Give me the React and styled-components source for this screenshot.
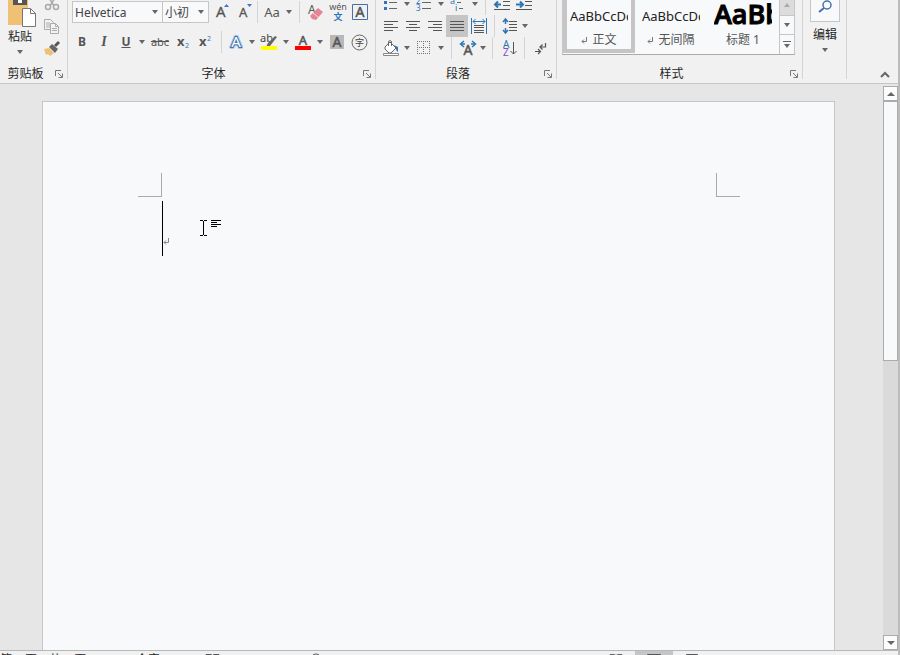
import React from 'react';
import styled, { createGlobalStyle } from 'styled-components';

const GlobalStyle = createGlobalStyle`
  * {
    box-sizing: border-box;
  }

  body {
    margin: 0;
    font-family: "Noto Sans", "Noto Sans CJK SC", sans-serif;
    font-size: 12px;
    color: #262626;
  }

  button, select {
    font: inherit;
    color: inherit;
  }

  svg {
    overflow: visible;
  }
`;

const Window = styled.div`
  display: flex;
  flex-direction: column;
  height: 100vh;
  background: #f1f1f1;
  border-right: 2px solid #bcbcbc;
  overflow: hidden;
`;

const Ribbon = styled.header`
  display: flex;
  align-items: flex-end;
  flex: none;
  height: 84px;
  border-bottom: 1px solid #c6c6c6;
  overflow: hidden;
`;

const Group = styled.section`
  display: flex;
  flex-direction: column;
  flex: none;
  justify-content: flex-end;
  width: ${props => props.$w}px;
  height: 79px;
  margin-bottom: 4px;
  border-right: 1px solid #d4d4d4;
`;

const GroupBody = styled.div`
  display: flex;
  flex: 1;
  min-height: 0;
  flex-direction: ${props => (props.$stack ? 'column' : 'row')};
  align-items: ${props => (props.$stack ? 'stretch' : 'flex-end')};
  justify-content: ${props => (props.$stack ? 'flex-end' : 'flex-start')};
  padding: 0 0 ${props => props.$bottom || 0}px ${props => props.$left || 0}px;
`;

const GroupFooter = styled.div`
  display: grid;
  grid-template-columns: 1fr 16px;
  align-items: center;
  justify-items: center;
  flex: none;
  height: 16px;
  line-height: 16px;
`;

const Row = styled.div`
  display: flex;
  align-items: center;
  flex: none;
  height: ${props => props.$h || 22}px;
`;

const Column = styled.div`
  display: flex;
  flex-direction: column;
  align-items: center;
  width: ${props => props.$w}px;
`;

const Tool = styled.button`
  display: flex;
  align-items: center;
  justify-content: center;
  flex: none;
  width: ${props => props.$w || 22}px;
  height: 22px;
  padding: 0;
  border: 0;
  background: ${props => (props.$active ? '#c5c5c5' : 'none')};
  color: #555;
`;

const Glyph = styled.span`
  font-size: ${props => props.$size || 12}px;
  line-height: 20px;
  font-weight: ${props => (props.$bold ? 700 : 400)};
  font-style: ${props => (props.$italic ? 'italic' : 'normal')};
  text-decoration: ${props => props.$line || 'none'};
  font-family: ${props => (props.$serif ? '"Liberation Serif", serif' : 'inherit')};
`;

const Divider = styled.span`
  flex: none;
  width: 1px;
  height: 22px;
  margin: 0 ${props => props.$gap || 5}px;
  background: #d4d4d4;
`;

const Big = styled.button`
  display: flex;
  flex-direction: column;
  align-items: center;
  width: 40px;
  padding: 0;
  border: 0;
  background: none;
  line-height: 18px;
`;

const ArrowSpace = styled.span`
  display: flex;
  justify-content: center;
  height: ${props => props.$h}px;
  padding-top: 4px;
`;

const FieldBox = styled.label`
  display: flex;
  align-items: center;
  position: relative;
  width: ${props => props.$w}px;
  height: 22px;
  border: 1px solid #c6c6c6;
  background: #f8f9fb;

  & + & {
    border-left: 0;
  }

  svg {
    position: absolute;
    right: 4px;
    pointer-events: none;
  }
`;

const Field = styled.select`
  appearance: none;
  width: 100%;
  height: 20px;
  padding: 0 2px;
  border: 0;
  background: none;
  color: #444;
`;

const Gallery = styled.div`
  display: flex;
  height: 60px;
  border: 1px solid #c6c6c6;
  border-bottom-color: #ababab;
  background: #f8f9fb;
`;

const StyleCard = styled.button`
  display: flex;
  flex-direction: column;
  align-items: center;
  justify-content: flex-end;
  width: 72px;
  height: 57px;
  padding: 0 3px;
  border: ${props => (props.$active ? '4px solid #c5c5c5' : '4px solid transparent')};
  background: none;
`;

const Sample = styled.span`
  flex: none;
  width: 58px;
  height: 26px;
  margin-bottom: 2px;
  overflow: hidden;
  color: ${props => (props.$heading ? '#000' : '#222')};
  white-space: nowrap;
  text-align: left;
  font-family: ${props => (props.$heading ? '"Open Sans", sans-serif' : 'inherit')};
  font-size: ${props => (props.$heading ? 27 : 13)}px;
  font-weight: ${props => (props.$heading ? 600 : 400)};
  line-height: ${props => (props.$heading ? 22 : 26)}px;
  -webkit-text-stroke: ${props => (props.$heading ? '1px #000' : '0')};
`;

const StyleName = styled.span`
  display: flex;
  align-items: center;
  flex: none;
  gap: 4px;
  height: 18px;
  line-height: 18px;
  color: #555;
`;

const GalleryScroll = styled.div`
  display: flex;
  flex-direction: column;
  width: 15px;
  margin-left: auto;
  border-left: 1px solid #c6c6c6;
`;

const ScrollStep = styled.button`
  display: flex;
  align-items: center;
  justify-content: center;
  flex: 1;
  padding: 0;
  border: 0;
  background: ${props => (props.$off ? '#dcdcdc' : '#f8f9fb')};

  & + & {
    border-top: 1px solid #c6c6c6;
  }
`;

const SearchBox = styled.span`
  display: flex;
  align-items: center;
  justify-content: center;
  width: 30px;
  height: 30px;
  margin-bottom: 4px;
  border: 1px solid #c6c6c6;
  background: #f8f9fb;
`;

const Collapse = styled.button`
  margin: 0 8px 4px auto;
  padding: 0;
  border: 0;
  background: none;
  line-height: 0;
`;

const Workspace = styled.main`
  display: flex;
  flex: 1;
  min-height: 0;
  background: #e6e6e6;
`;

const Canvas = styled.div`
  flex: 1;
  padding: 17px 48px 0 42px;
`;

const Page = styled.article`
  height: 100%;
  padding: 71px 94px 0 95px;
  border: 1px solid #c6c6c6;
  border-bottom: 0;
  background: #f8f9fb;
`;

const Margins = styled.div`
  display: flex;
  justify-content: space-between;
`;

const Corner = styled.span`
  width: 24px;
  height: 24px;
  border-bottom: 1px solid #ababab;
  border-right: ${props => (props.$right ? 0 : '1px solid #ababab')};
  border-left: ${props => (props.$right ? '1px solid #ababab' : 0)};
`;

const Line = styled.div`
  display: flex;
  height: 55px;
  margin: 4px 0 0 24px;
`;

const Caret = styled.span`
  width: 1px;
  height: 55px;
  background: #000;
`;

const ParagraphEnd = styled.span`
  padding-top: 36px;
  line-height: 0;
`;

const Pointer = styled.span`
  padding: 18px 0 0 29px;
  line-height: 0;
`;

const Scrollbar = styled.div`
  display: flex;
  flex-direction: column;
  width: 15px;
  margin-top: 2px;
  background: #dadada;
`;

const ScrollArrow = styled.button`
  display: flex;
  align-items: center;
  justify-content: center;
  flex: none;
  height: 15px;
  padding: 0;
  border: 1px solid #ababab;
  background: #fcfcfc;
`;

const Thumb = styled.div`
  height: 260px;
  margin-bottom: auto;
  border: 1px solid #ababab;
  background: #f8f9fb;
`;

const Status = styled.footer`
  display: flex;
  flex: none;
  height: 5px;
  border-top: 1px solid #b8b8b8;
  background: #f1f1f1;
  overflow: hidden;
  line-height: 18px;
`;

const StatusItem = styled.span`
  flex: none;
  width: ${props => props.$w}px;
  white-space: nowrap;
`;

const StatusIcon = styled(StatusItem)`
  padding-top: 2px;
  line-height: 0;
`;

const Views = styled.div`
  display: flex;
  margin-left: auto;
  margin-right: 187px;
`;

const View = styled.button`
  display: flex;
  align-items: flex-start;
  justify-content: center;
  width: 38px;
  height: 22px;
  padding: 2px 0 0;
  border: 0;
  background: ${props => (props.$active ? '#c5c5c5' : 'none')};
`;

const Arrow = ({ up, w = 6, color = '#666' }) => (
  <svg width={w} height="4" viewBox="0 0 6 4" preserveAspectRatio="none" aria-hidden="true">
    <path d={up ? 'M0 4h6L3 0z' : 'M0 0h6L3 4z'} fill={color} />
  </svg>
);

const Drop = ({ w = 10, label }) => (
  <Tool $w={w} aria-label={label}><Arrow /></Tool>
);

const Launcher = () => (
  <Tool $w={12} aria-label="更多选项">
    <svg width="8" height="8" viewBox="0 0 8 8" fill="none" stroke="#777">
      <path d="M.5 6V.5H6M3 3l4 4M7.500 3.500v4h-4" />
    </svg>
  </Tool>
);

const Lines = ({ rows, size = 14 }) => (
  <svg width={size} height="12" viewBox={`0 0 ${size} 12`} stroke="#555">
    {rows.map(([from, to], i) => <path key={i} d={`M${from} ${i * 3 + 1.5}H${to}`} />)}
  </svg>
);

const PasteIcon = () => (
  <svg width="30" height="32" viewBox="0 0 30 32">
    <path d="M3 4h20v25H3z" fill="#efc175" />
    <path d="M8 1h14v8H8z" fill="#555" />
    <path d="M13 4h4v3h-4z" fill="#fff" />
    <path d="M17.500 12.500h8l5 5v13h-13z" fill="#fff" stroke="#777" />
    <path d="M25.500 12.500v5h5" fill="none" stroke="#777" />
  </svg>
);

const CutIcon = () => (
  <svg width="16" height="16" viewBox="0 0 16 16" fill="none" stroke="#aaa" strokeWidth="1.500">
    <path d="M4 0l6 10M12 0L6 10" />
    <circle cx="4" cy="11" r="2.500" />
    <circle cx="12" cy="11" r="2.500" />
  </svg>
);

const CopyIcon = () => (
  <svg width="16" height="15" viewBox="0 0 16 15" fill="#f4f4f4" stroke="#aaa">
    <path d="M.5.5h6l3 3v7h-9zM2 4h4M2 6h5M2 8h5" />
    <path d="M6.500 4.500h5l3 3v7h-8zM11.500 4.500v3h3M8 9.500h5M8 11.500h5" />
  </svg>
);

const BrushIcon = () => (
  <svg width="16" height="15" viewBox="0 0 16 15">
    <path d="M0 8l5-1 5 5-4 3-2-2-2 1z" fill="#efc175" />
    <path d="M5 6l3-3 6 5-3 4z" fill="#666" />
    <path d="M10 4l4-4 2 2-4 4z" fill="#555" />
  </svg>
);

const EraserIcon = () => (
  <svg width="16" height="18" viewBox="0 0 16 18">
    <text x="0" y="11" fontSize="12" fill="#555">A</text>
    <path d="M2 13l8-8 5 4-7 8-4-1z" fill="#e58593" />
    <path d="M5 10l5 4" stroke="#f8d4d8" />
  </svg>
);

const PinyinIcon = () => (
  <svg width="18" height="20" viewBox="0 0 18 20">
    <text x="9" y="8" fontSize="9" textAnchor="middle" fill="#555">wén</text>
    <text x="9" y="18" fontSize="9" textAnchor="middle" fill="#2e75b6" fontWeight="700">文</text>
  </svg>
);

const BoxedIcon = () => (
  <svg width="16" height="17" viewBox="0 0 16 17">
    <path d="M.5.5h15v15H.5z" fill="none" stroke="#4472a8" />
    <text x="8" y="13" fontSize="14" textAnchor="middle" fill="#555" stroke="#555" strokeWidth=".5">A</text>
  </svg>
);

const ResizeIcon = ({ up }) => (
  <svg width="14" height="18" viewBox="0 0 14 18">
    <text x="1" y="14" fontSize={up ? 15 : 13} fill="#555" stroke="#555" strokeWidth=".3">A</text>
    <path d={up ? 'M9 4h5l-2.500-3z' : 'M9 1h5l-2.500 3z'} fill="#4472c4" />
  </svg>
);

const OutlineIcon = () => (
  <svg width="16" height="18" viewBox="0 0 16 18" fontSize="15">
    <text x="7" y="14" textAnchor="middle" fill="none" stroke="#a9cbea" strokeWidth="4" strokeLinejoin="round">A</text>
    <text x="7" y="14" textAnchor="middle" fill="none" stroke="#4472a8" strokeWidth="2">A</text>
    <text x="7" y="14" textAnchor="middle" fill="#fff">A</text>
  </svg>
);

const HighlightIcon = () => (
  <svg width="18" height="18" viewBox="0 0 18 18">
    <text x="0" y="9" fontSize="11" fill="#444">ab</text>
    <path d="M15 3l2 1-7 9-4 1 2-4z" fill="#666" />
    <path d="M1 13h16v4H1z" fill="#ff0" />
  </svg>
);

const FontColorIcon = () => (
  <svg width="16" height="18" viewBox="0 0 16 18">
    <text x="8" y="12" fontSize="13" textAnchor="middle" fill="#555" stroke="#555" strokeWidth=".5">A</text>
    <path d="M0 13h16v4H0z" fill="#f00" />
  </svg>
);

const ShadeIcon = () => (
  <svg width="14" height="14" viewBox="0 0 14 14">
    <path d="M0 0h14v14H0z" fill="#b8b8b8" />
    <text x="7" y="12" fontSize="14" textAnchor="middle" fill="#555" stroke="#555" strokeWidth=".5">A</text>
  </svg>
);

const CircledIcon = () => (
  <svg width="17" height="17" viewBox="0 0 17 17">
    <circle cx="8.500" cy="8.500" r="7.500" fill="none" stroke="#666" />
    <text x="8.500" y="12" fontSize="9" textAnchor="middle" fill="#444">字</text>
  </svg>
);

const ScriptIcon = ({ sup }) => (
  <svg width="14" height="16" viewBox="0 0 14 16">
    <text x="1" y="12" fontSize="13" fontWeight="700" fill="#555">x</text>
    <text x="9" y={sup ? 7 : 14} fontSize="7" fill="#2e75b6">2</text>
  </svg>
);

const BulletIcon = () => (
  <svg width="14" height="16" viewBox="0 0 14 16" stroke="#666">
    <path d="M5 6.500h8M5 12.500h8" />
    <path d="M0 6.500h3M0 12.500h3" stroke="#2e75b6" strokeWidth="3" />
  </svg>
);

const NumberIcon = () => (
  <svg width="16" height="18" viewBox="0 0 16 18" fontSize="8" fill="#2e75b6">
    <text x="0" y="9">2</text>
    <text x="0" y="16">3</text>
    <path d="M6 7.500h9M6 13.500h9" stroke="#666" />
  </svg>
);

const LevelIcon = () => (
  <svg width="16" height="18" viewBox="0 0 16 18" fontSize="9" fill="#2e75b6">
    <text x="0" y="9">a</text>
    <text x="5" y="16">i</text>
    <path d="M7 7.500h4M9 13.500h4" stroke="#666" />
  </svg>
);

const IndentIcon = ({ out }) => (
  <svg width="16" height="16" viewBox="0 0 16 16">
    <path d="M9 5.500h7M9 9.500h7M0 13.500h16" stroke="#555" />
    <path
      d={out ? 'M1 8.500h6M4 5.500l-3 3 3 3' : 'M0 8.500h7M4 5.500l3 3-3 3'}
      fill="none"
      stroke="#2e75b6"
      strokeWidth="2"
    />
  </svg>
);

const DistributeIcon = () => (
  <svg width="16" height="16" viewBox="0 0 16 16" fill="none">
    <path d="M.5 0v16M15.500 0v16M2 3.500h12M4.500 1L2 3.500 4.500 6M11.500 1L14 3.500 11.500 6" stroke="#2e75b6" />
    <path d="M3 7.500h10M3 9.500h10M3 12.500h10M3 14.500h10" stroke="#555" />
  </svg>
);

const SpacingIcon = () => (
  <svg width="16" height="16" viewBox="0 0 16 16" fill="none">
    <path d="M3.500 1v5M1 4l2.500-3L6 4M3.500 10v5M1 12l2.500 3L6 12" stroke="#2e75b6" strokeWidth="1.500" />
    <path d="M7 3.500h8M7 6.500h8M7 9.500h8M7 12.500h8" stroke="#555" />
  </svg>
);

const BucketIcon = () => (
  <svg width="18" height="17" viewBox="0 0 18 17" fill="none">
    <path d="M3 7l5-5 6 6-5 5H7L3 9z" fill="#fff" stroke="#666" />
    <path d="M6.500 6V1.500c0-1 3-1 3 0V6" stroke="#666" />
    <path d="M12 5l4 2v5c-2-1-2-3-2-4z" fill="#2e75b6" />
    <path d="M1.500 13.500h15v2h-15z" fill="#fff" stroke="#888" />
  </svg>
);

const BorderIcon = () => (
  <svg width="14" height="14" viewBox="0 0 14 14" stroke="#777" strokeDasharray="1 1">
    <path d="M0 .5h14M0 6.500h14M0 12.500h14M.5 0v14M6.500 0v14M12.500 0v14" />
  </svg>
);

const WidthIcon = () => (
  <svg width="18" height="16" viewBox="0 0 18 16">
    <text x="9" y="15" fontSize="14" textAnchor="middle" fill="#555" stroke="#555" strokeWidth=".5">A</text>
    <path d="M5 1L1.500 4 5 7M2 4h4M13 1l3.500 3L13 7M16 4h-4" fill="none" stroke="#2e75b6" strokeWidth="1.500" />
  </svg>
);

const SortIcon = () => (
  <svg width="16" height="18" viewBox="0 0 16 18" fontSize="10">
    <text x="2" y="9" fill="#2e75b6">A</text>
    <text x="2" y="17" fill="#7e4fc0">Z</text>
    <path d="M12.500 3v12M9.500 12l3 3 3-3" fill="none" stroke="#555" />
  </svg>
);

const MarksIcon = () => (
  <svg width="12" height="14" viewBox="0 0 12 14" fill="none" stroke="#555">
    <path d="M11.500 2v4H6M8.500 3.500L6 6l2.500 2.500M1 10.500h5M4 8l2.500 2.500L4 13" strokeWidth="1.200" />
  </svg>
);

const ReturnMark = ({ color = '#777' }) => (
  <svg width="7" height="9" viewBox="0 0 7 9" fill="none" stroke={color}>
    <path d="M5.500 1v4.500H1M3 3.500l-2 2 2 2" />
  </svg>
);

const cards = [
  { name: '正文', mark: true, active: true },
  { name: '无间隔', mark: true },
  { name: '标题 1', heading: true },
];

const App = () => {
  return (
    <>
      <GlobalStyle />
      <Window>
        <Ribbon>
          <Group $w={68}>
            <GroupBody>
              <Big>
                <PasteIcon />
                粘贴
                <ArrowSpace $h={17}><Arrow /></ArrowSpace>
              </Big>
              <Column $w={24}>
                <Tool aria-label="剪切"><CutIcon /></Tool>
                <Tool aria-label="复制"><CopyIcon /></Tool>
                <Tool aria-label="格式刷"><BrushIcon /></Tool>
                <ArrowSpace $h={4} />
              </Column>
            </GroupBody>
            <GroupFooter>剪贴板<Launcher /></GroupFooter>
          </Group>

          <Group $w={308}>
            <GroupBody $stack $left={4} $bottom={6}>
              <Row $h={30}>
                <FieldBox $w={91}>
                  <Field aria-label="字体"><option>Helvetica</option></Field>
                  <Arrow />
                </FieldBox>
                <FieldBox $w={46}>
                  <Field aria-label="字号"><option>小初</option></Field>
                  <Arrow />
                </FieldBox>
                <Tool $w={26} aria-label="增大字号"><ResizeIcon up /></Tool>
                <Tool $w={20} aria-label="减小字号"><ResizeIcon /></Tool>
                <Divider $gap={2} />
                <Tool $w={24} aria-label="更改大小写"><Glyph $size={13}>Aa</Glyph></Tool>
                <Drop label="大小写选项" />
                <Divider />
                <Tool aria-label="清除格式"><EraserIcon /></Tool>
                <Tool aria-label="拼音指南"><PinyinIcon /></Tool>
                <Tool aria-label="字符边框"><BoxedIcon /></Tool>
              </Row>
              <Row $h={30}>
                <Tool $w={20}><Glyph $bold>B</Glyph></Tool>
                <Tool $w={24}><Glyph $bold $italic $serif $size={14}>I</Glyph></Tool>
                <Tool $w={20}><Glyph $bold $line="underline">U</Glyph></Tool>
                <Drop w={12} label="下划线选项" />
                <Tool $w={24}><Glyph $size={11} $line="line-through">abc</Glyph></Tool>
                <Tool aria-label="下标"><ScriptIcon /></Tool>
                <Tool aria-label="上标"><ScriptIcon sup /></Tool>
                <Divider />
                <Tool $w={20} aria-label="文本效果"><OutlineIcon /></Tool>
                <Drop label="文本效果选项" />
                <Tool $w={24} aria-label="突出显示"><HighlightIcon /></Tool>
                <Drop label="突出显示选项" />
                <Tool $w={24} aria-label="字体颜色"><FontColorIcon /></Tool>
                <Drop label="字体颜色选项" />
                <Tool $w={24} aria-label="字符底纹"><ShadeIcon /></Tool>
                <Tool $w={20} aria-label="带圈字符"><CircledIcon /></Tool>
              </Row>
            </GroupBody>
            <GroupFooter>字体<Launcher /></GroupFooter>
          </Group>

          <Group $w={181}>
            <GroupBody $stack $left={4} $bottom={4}>
              <Row>
                <Tool aria-label="项目符号"><BulletIcon /></Tool>
                <Drop label="项目符号选项" />
                <Tool $w={24} aria-label="编号"><NumberIcon /></Tool>
                <Drop label="编号选项" />
                <Tool $w={24} aria-label="多级列表"><LevelIcon /></Tool>
                <Drop label="多级列表选项" />
                <Divider />
                <Tool aria-label="减少缩进量"><IndentIcon out /></Tool>
                <Tool aria-label="增加缩进量"><IndentIcon /></Tool>
              </Row>
              <Row>
                <Tool aria-label="左对齐"><Lines rows={[[0, 14], [0, 9], [0, 14], [0, 9]]} /></Tool>
                <Tool aria-label="居中"><Lines rows={[[0, 14], [3, 11], [0, 14], [3, 11]]} /></Tool>
                <Tool aria-label="右对齐"><Lines rows={[[0, 14], [5, 14], [0, 14], [5, 14]]} /></Tool>
                <Tool $active aria-label="两端对齐"><Lines rows={[[0, 14], [0, 14], [0, 14], [0, 14]]} /></Tool>
                <Tool aria-label="分散对齐"><DistributeIcon /></Tool>
                <Divider $gap={4} />
                <Tool $w={22} aria-label="行距"><SpacingIcon /></Tool>
                <Drop w={8} label="行距选项" />
              </Row>
              <Row>
                <Tool aria-label="底纹"><BucketIcon /></Tool>
                <Drop label="底纹选项" />
                <Tool $w={24} aria-label="边框"><BorderIcon /></Tool>
                <Drop label="边框选项" />
                <Divider />
                <Tool $w={22} aria-label="中文版式"><WidthIcon /></Tool>
                <Drop w={8} label="中文版式选项" />
                <Divider />
                <Tool aria-label="排序"><SortIcon /></Tool>
                <Divider $gap={4} />
                <Tool aria-label="显示编辑标记"><MarksIcon /></Tool>
              </Row>
            </GroupBody>
            <GroupFooter>段落<Launcher /></GroupFooter>
          </Group>

          <Group $w={246}>
            <GroupBody $stack $left={5} $bottom={8}>
              <Row $h={60}>
                <Gallery>
                  {cards.map(card => (
                    <StyleCard key={card.name} $active={card.active}>
                      <Sample $heading={card.heading}>AaBbCcDd</Sample>
                      <StyleName>{card.mark && <ReturnMark />}{card.name}</StyleName>
                    </StyleCard>
                  ))}
                  <GalleryScroll>
                    <ScrollStep $off aria-label="上一行"><Arrow up color="#aaa" /></ScrollStep>
                    <ScrollStep aria-label="下一行"><Arrow /></ScrollStep>
                    <ScrollStep aria-label="其他样式">
                      <svg width="8" height="8" viewBox="0 0 8 8">
                        <path d="M0 0h8v1H0zM1 3h6L4 7z" fill="#666" />
                      </svg>
                    </ScrollStep>
                  </GalleryScroll>
                </Gallery>
              </Row>
            </GroupBody>
            <GroupFooter>样式<Launcher /></GroupFooter>
          </Group>

          <Group $w={44}>
            <GroupBody $left={2}>
              <Big>
                <SearchBox>
                  <svg width="16" height="16" viewBox="0 0 16 16" fill="none" stroke="#4472a8">
                    <circle cx="10" cy="6" r="4" strokeWidth="1.500" />
                    <path d="M7 9l-5 4" strokeWidth="2" />
                  </svg>
                </SearchBox>
                编辑
                <ArrowSpace $h={19}><Arrow /></ArrowSpace>
              </Big>
            </GroupBody>
            <GroupFooter />
          </Group>

          <Collapse aria-label="折叠功能区">
            <svg width="10" height="8" viewBox="0 0 10 8" fill="none" stroke="#666" strokeWidth="2">
              <path d="M1 6l4-4 4 4" />
            </svg>
          </Collapse>
        </Ribbon>

        <Workspace>
          <Canvas>
            <Page>
              <Margins>
                <Corner />
                <Corner $right />
              </Margins>
              <Line>
                <Caret />
                <ParagraphEnd><ReturnMark color="#888" /></ParagraphEnd>
                <Pointer>
                  <svg width="24" height="18" viewBox="0 0 24 18" fill="none" stroke="#000">
                    <path d="M1 1.500h3M5 1.500h3M4.500 2v14M1 16.500h3M5 16.500h3" />
                    <path d="M12 1.500h10M12 3.500h6M12 5.500h10M12 7.500h6" />
                  </svg>
                </Pointer>
              </Line>
            </Page>
          </Canvas>
          <Scrollbar>
            <ScrollArrow aria-label="向上滚动"><Arrow up w={8} /></ScrollArrow>
            <Thumb />
            <ScrollArrow aria-label="向下滚动"><Arrow w={8} /></ScrollArrow>
          </Scrollbar>
        </Workspace>

        <Status>
          <StatusItem $w={126}>第 1 页，共 1 页</StatusItem>
          <StatusItem $w={80}>0 个字</StatusItem>
          <StatusIcon $w={104}>
            <svg width="14" height="12" viewBox="0 0 14 12" fill="none" stroke="#555">
              <path d="M0 1.500h5l1.500 1L8 1.500h5v9H0z" />
            </svg>
          </StatusIcon>
          <StatusIcon $w={12}>
            <svg width="12" height="12" viewBox="0 0 12 12" fill="none" stroke="#555">
              <circle cx="6" cy="6" r="5" />
            </svg>
          </StatusIcon>
          <Views>
            <View aria-label="阅读视图">
              <svg width="14" height="12" viewBox="0 0 14 12" fill="none" stroke="#666">
                <path d="M1 1.500h4l2 1 2-1h4v8H1z" />
              </svg>
            </View>
            <View $active aria-label="页面视图">
              <svg width="14" height="12" viewBox="0 0 14 12" fill="none" stroke="#555">
                <path d="M.5 1.500h13v10H.5zM3 4.500h8M3 6.500h8" />
              </svg>
            </View>
            <View aria-label="Web 版式视图">
              <svg width="12" height="12" viewBox="0 0 12 12" fill="none" stroke="#555">
                <path d="M.5 1.500h11v10H.5zM2 4.500h8" />
              </svg>
            </View>
          </Views>
        </Status>
      </Window>
    </>
  );
};

export default App;
